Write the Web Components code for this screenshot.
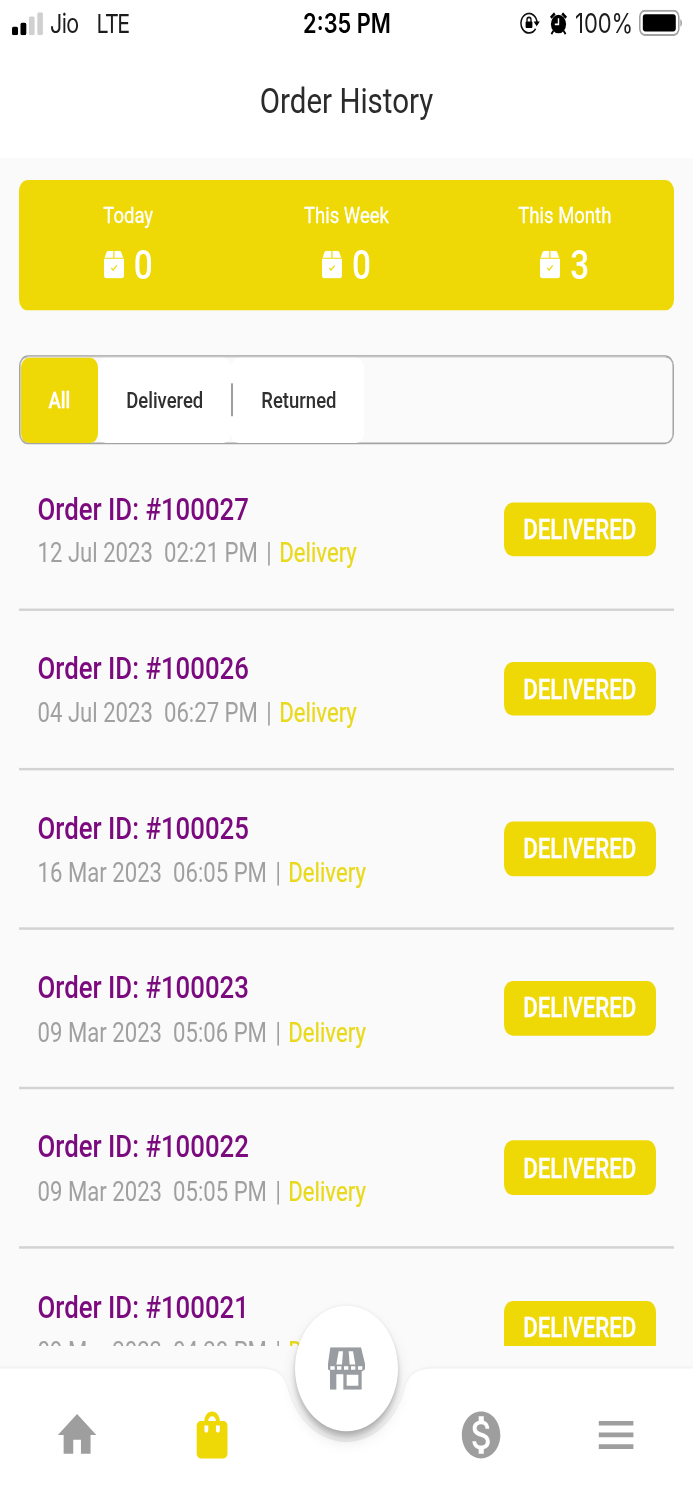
<!DOCTYPE html>
<html lang="en">
<head>
    <meta charset="utf-8">
    <title>Order History</title>
    <style>
        body {
            margin: 0;
            height: 1500px;
            overflow: hidden;
            background: #fff;
            font-family: Roboto, "Liberation Sans", sans-serif;
        }
    </style>
</head>
<body>
    <order-app>
        <status-bar carrier="Jio" network="LTE" time="2:35 PM" battery="100%"></status-bar>
        <page-title>Order History</page-title>
        <order-summary>
            <summary-item label="Today">0</summary-item>
            <summary-item label="This Week">0</summary-item>
            <summary-item label="This Month">3</summary-item>
        </order-summary>
        <filter-tabs>
            <filter-tab active>All</filter-tab>
            <filter-tab>Delivered</filter-tab>
            <filter-tab divided>Returned</filter-tab>
        </filter-tabs>
        <order-list></order-list>
        <bottom-nav slot="nav"></bottom-nav>
    </order-app>

    <script>
        class OrderApp extends HTMLElement {
            constructor() {
                super();
                this.attachShadow({ mode: "open" }).innerHTML = `
                <style>
                    :host {
                        --primary: #eed906;
                        --grey: #9e9e9e;
                        --accent: #7b0a7e;
                        display: flex;
                        flex-direction: column;
                        width: 693px;
                        height: 1232.6px;
                        overflow: hidden;
                        background: #fafafa;
                        transform: scaleY(1.217);
                        transform-origin: 0 0;
                    }
                    main {
                        display: flex;
                        flex-direction: column;
                        height: 1106.6px;
                        overflow: hidden;
                    }
                    footer {
                        flex: none;
                        margin-top: 18px;
                    }
                </style>
                <main><slot></slot></main>
                <footer><slot name="nav"></slot></footer>`;
            }
        }

        class StatusBar extends HTMLElement {
            connectedCallback() {
                this.attachShadow({ mode: "open" }).innerHTML = `
                <style>
                    :host {
                        flex: none;
                        display: grid;
                        grid-template-columns: 1fr auto 1fr;
                        align-items: center;
                        box-sizing: border-box;
                        height: 37px;
                        padding: 1px 11px 0 12px;
                        background: #fff;
                        color: #1c1c1c;
                        font-family: Inter, Roboto, sans-serif;
                        font-size: 21.5px;
                        line-height: 26px;
                    }
                    div {
                        display: flex;
                        align-items: center;
                    }
                    .right {
                        justify-content: flex-end;
                    }
                    .time {
                        font-weight: 600;
                        font-size: 21.8px;
                        color: #000;
                    }
                    .carrier {
                        margin: 0 18px 0 7px;
                    }
                    .carrier, .network {
                        letter-spacing: -0.6px;
                    }
                    .network {
                        letter-spacing: -1.6px;
                    }
                    .battery {
                        margin: 0 6px 0 8px;
                        font-size: 22px;
                        letter-spacing: -0.1px;
                    }
                    .alarm {
                        margin-left: 10px;
                    }
                    svg {
                        display: block;
                        flex: none;
                    }
                </style>
                <div>
                    <svg width="31" height="19" viewBox="0 0 31 19">
                        <rect x="0" y="12" width="6" height="7" rx="1.5"/>
                        <rect x="8.5" y="8.7" width="5.8" height="10.3" rx="1.5"/>
                        <rect x="17" y="3.5" width="5.6" height="15.5" rx="1.5" fill="#d0d0d0"/>
                        <rect x="25.3" y="0" width="5.6" height="19" rx="1.5" fill="#d0d0d0"/>
                    </svg>
                    <span class="carrier">${this.getAttribute("carrier")}</span>
                    <span class="network">${this.getAttribute("network")}</span>
                </div>
                <span class="time">${this.getAttribute("time")}</span>
                <div class="right">
                    <svg width="20" height="18" viewBox="0 0 20 18">
                        <path d="M15.6 13.6A8 8 0 1 1 17 9" fill="none" stroke="#111" stroke-width="1.5"/>
                        <path d="M13.6 7.6h6.2l-3.1 4z"/>
                        <rect x="5.6" y="7.6" width="6.8" height="5.4" rx=".8"/>
                        <path d="M7 8V6.3a2 2 0 0 1 4 0V8" fill="none" stroke="#111" stroke-width="1.4"/>
                    </svg>
                    <svg class="alarm" width="17" height="19" viewBox="0 0 17 19">
                        <circle cx="8.5" cy="9.8" r="7.6"/>
                        <path d="M.8 4.6 4.8 1M16.2 4.6 12.2 1" stroke="#000" stroke-width="2.4"/>
                        <path d="M3.4 15.4 1.4 18M13.6 15.4l2 2.6" stroke="#000" stroke-width="1.8"/>
                        <path d="M8.5 5v5H4.8" fill="none" stroke="#fff" stroke-width="1.4"/>
                    </svg>
                    <span class="battery">${this.getAttribute("battery")}</span>
                    <svg width="43" height="22" viewBox="0 0 43 22">
                        <rect x=".8" y=".9" width="39" height="19.8" rx="5" fill="#fff" stroke="#a2a2a2" stroke-width="1.6"/>
                        <rect x="3.8" y="3.8" width="33" height="14" rx="2.6"/>
                        <path d="M41.4 7.6c2 1 2 5.4 0 6.4z" fill="#999"/>
                    </svg>
                </div>`;
            }
        }

        class PageTitle extends HTMLElement {
            constructor() {
                super();
                this.attachShadow({ mode: "open" }).innerHTML = `
                <style>
                    :host {
                        flex: none;
                        display: flex;
                        align-items: center;
                        justify-content: center;
                        box-sizing: border-box;
                        height: 92.5px;
                        background: #fff;
                        color: #2b2b2b;
                        font-size: 29.5px;
                    }
                </style>
                <slot></slot>`;
            }
        }

        class OrderSummary extends HTMLElement {
            constructor() {
                super();
                this.attachShadow({ mode: "open" }).innerHTML = `
                <style>
                    :host {
                        flex: none;
                        display: grid;
                        grid-template-columns: repeat(3, 1fr);
                        box-sizing: border-box;
                        height: 107px;
                        margin: 18.6px 19px 0;
                        padding-top: 18px;
                        border-radius: 9px;
                        background: var(--primary);
                        color: #fff;
                    }
                </style>
                <slot></slot>`;
            }
        }

        class SummaryItem extends HTMLElement {
            connectedCallback() {
                this.attachShadow({ mode: "open" }).innerHTML = `
                <style>
                    :host {
                        display: flex;
                        flex-direction: column;
                        align-items: center;
                        gap: 10px;
                    }
                    .label {
                        font-size: 18.5px;
                        line-height: 22px;
                        -webkit-text-stroke: 0.25px;
                    }
                    .value {
                        display: flex;
                        align-items: center;
                        gap: 10px;
                        font-size: 33.3px;
                        line-height: 39px;
                        font-weight: 500;
                    }
                </style>
                <span class="label">${this.getAttribute("label")}</span>
                <div class="value">
                    <svg width="20" height="23" viewBox="0 0 20 23" fill="#fff">
                        <path d="M4.4 0h4.9v5.8H.6L2.4 1.4Q3 0 4.4 0zM10.5 0h4.9q1.4 0 2 1.4l1.8 4.4h-8.7z"/>
                        <path d="M0 6.7h20v13.9q0 2-2 2H2q-2 0-2-2z"/>
                        <path d="m7.2 14.2 1.9 1.7 3.6-3.7" fill="none" stroke="#eed906" stroke-width="1.1"/>
                    </svg>
                    <slot></slot>
                </div>`;
            }
        }

        class FilterTabs extends HTMLElement {
            constructor() {
                super();
                this.attachShadow({ mode: "open" }).innerHTML = `
                <style>
                    :host {
                        flex: none;
                        display: flex;
                        box-sizing: border-box;
                        height: 73px;
                        margin: 37.4px 19px 0.6px;
                        border: 1px solid #a3a3a3;
                        border-radius: 9px;
                        box-shadow: inset 0 0 0 .5px #a3a3a3;
                    }
                </style>
                <slot></slot>`;
            }
        }

        class FilterTab extends HTMLElement {
            constructor() {
                super();
                this.attachShadow({ mode: "open" }).innerHTML = `
                <style>
                    :host {
                        display: flex;
                        align-items: center;
                        margin: 0.5px 0;
                        border-radius: 8px;
                        background: #fff;
                        color: #303030;
                        font-size: 18.5px;
                        font-weight: 500;
                    }
                    :host([active]) {
                        margin-left: 0.5px;
                        background: var(--primary);
                        color: #fff;
                        -webkit-text-stroke: 0.3px;
                    }
                    :host([divided])::before {
                        content: "";
                        width: 2px;
                        height: 27px;
                        background: var(--grey);
                    }
                    span {
                        padding: 0 28px;
                    }
                </style>
                <span><slot></slot></span>`;
            }
        }

        class OrderItem extends HTMLElement {
            set order(order) {
                this._order = order;
                this.render();
            }

            render() {
                const root = this.shadowRoot || this.attachShadow({ mode: "open" });
                root.innerHTML = `
                <style>
                    :host {
                        flex: none;
                        display: flex;
                        align-items: center;
                        justify-content: space-between;
                        box-sizing: border-box;
                        height: 131.18px;
                        padding: 0 18.5px;
                        border-bottom: 2px solid #d3d3d3;
                    }
                    .id {
                        color: var(--accent);
                        font-size: 25.8px;
                        line-height: 30px;
                        font-weight: 500;
                    }
                    .meta {
                        margin-top: 8.6px;
                        color: #a0a0a0;
                        font-size: 22.15px;
                        line-height: 26px;
                        white-space: pre;
                    }
                    .sep {
                        padding: 0 2px 0 3px;
                    }
                    .type {
                        color: #e9d91c;
                        -webkit-text-stroke: 0.2px;
                    }
                    .badge {
                        display: flex;
                        align-items: center;
                        justify-content: center;
                        width: 151.5px;
                        height: 44.6px;
                        border-radius: 9px;
                        background: var(--primary);
                        color: #fff;
                        font-size: 22.2px;
                        font-weight: 500;
                        -webkit-text-stroke: 0.3px;
                    }
                </style>
                <div>
                    <div class="id">Order ID: #${this._order.id}</div>
                    <div class="meta">${this._order.date}  ${this._order.time} <span class="sep">|</span> <span class="type">Delivery</span></div>
                </div>
                <div class="badge">DELIVERED</div>`;
            }
        }

        class OrderList extends HTMLElement {
            connectedCallback() {
                this.attachShadow({ mode: "open" }).innerHTML = `
                <style>
                    :host {
                        flex: none;
                        display: flex;
                        flex-direction: column;
                        margin: 4.3px 19px 0;
                    }
                </style>`;
                this.orders.forEach(order => {
                    const item = document.createElement("order-item");
                    item.order = order;
                    this.shadowRoot.appendChild(item);
                });
            }

            get orders() {
                return [
                    { id: 100027, date: "12 Jul 2023", time: "02:21 PM" },
                    { id: 100026, date: "04 Jul 2023", time: "06:27 PM" },
                    { id: 100025, date: "16 Mar 2023", time: "06:05 PM" },
                    { id: 100023, date: "09 Mar 2023", time: "05:06 PM" },
                    { id: 100022, date: "09 Mar 2023", time: "05:05 PM" },
                    { id: 100021, date: "09 Mar 2023", time: "04:28 PM" }
                ];
            }
        }

        class BottomNav extends HTMLElement {
            constructor() {
                super();
                this.attachShadow({ mode: "open" }).innerHTML = `
                <style>
                    :host {
                        position: relative;
                        display: block;
                        height: 108.5px;
                    }
                    .bar {
                        position: absolute;
                        top: 0;
                        left: 0;
                        overflow: visible;
                        filter: drop-shadow(0 -1px 1px rgba(0, 0, 0, .05));
                    }
                    /* floating action button sitting in the notch */
                    .fab {
                        position: absolute;
                        top: -51.5px;
                        left: 294.5px;
                        display: flex;
                        align-items: center;
                        justify-content: center;
                        width: 103.5px;
                        height: 103.5px;
                        border-radius: 50%;
                        background: #fff;
                        box-shadow: 0 6px 6px -1px rgba(0, 0, 0, .22), 0 8px 14px rgba(0, 0, 0, .1), 0 0 3px rgba(0, 0, 0, .08);
                    }
                    .items {
                        position: relative;
                        display: grid;
                        grid-template-columns: repeat(5, 1fr);
                        justify-items: center;
                        padding: 32px 9.5px 0;
                        fill: var(--grey);
                    }
                    .items svg {
                        width: 46.2px;
                        height: 46.2px;
                    }
                    .items .active {
                        fill: var(--primary);
                    }
                </style>
                <svg class="bar" width="693" height="109" viewBox="0 0 693 109">
                    <path d="M0 .5H258C276 .5 284 5 288 18A61 61 0 0 0 404.5 18C408.5 5 417 .5 435 .5H693V109H0z" fill="#fff"/>
                </svg>
                <div class="fab">
                    <svg width="37" height="35" viewBox="0 0 111 128" preserveAspectRatio="none">
                        <path d="M7 0H99L111 50V66L103 72H8L0 66V50z" fill="#999ca1"/>
                        <path d="M32 12H45L42 52H25zM62 12H75L82 52H65z" fill="#fff"/>
                        <path d="M7 57h13v11H7zM27 57h13v11H27zM48 57h13v11H48zM69 57h13v11H69zM90 57h13v11H90z" fill="#fff"/>
                        <path d="M6 71H101V128H46V81H25V128H6zM56 83V116H91V83z" fill="#999ca1" fill-rule="evenodd"/>
                    </svg>
                </div>
                <div class="items">
                    <svg viewBox="0 0 24 24"><path d="M10 20v-6h4v6h5v-8h3L12 3 2 12h3v8z"/></svg>
                    <svg class="active" viewBox="0 0 24 24"><path d="M18 6h-2c0-2.21-1.79-4-4-4S8 3.79 8 6H6c-1.1 0-2 .9-2 2v12c0 1.1.9 2 2 2h12c1.1 0 2-.9 2-2V8c0-1.1-.9-2-2-2zm-8 4c0 .55-.45 1-1 1s-1-.45-1-1V8h2v2zm2-6c1.1 0 2 .9 2 2h-4c0-1.1.9-2 2-2zm4 6c0 .55-.45 1-1 1s-1-.45-1-1V8h2v2z"/></svg>
                    <span></span>
                    <svg viewBox="0 0 24 24"><path d="M12 2C6.48 2 2 6.48 2 12s4.48 10 10 10 10-4.48 10-10S17.52 2 12 2zm1.41 16.09V20h-2.67v-1.93c-1.71-.36-3.16-1.46-3.27-3.4h1.96c.1 1.05.82 1.87 2.65 1.87 1.96 0 2.4-.98 2.4-1.59 0-.83-.44-1.61-2.67-2.14-2.48-.6-4.18-1.62-4.18-3.67 0-1.72 1.39-2.84 3.11-3.21V4h2.67v1.95c1.86.45 2.79 1.86 2.85 3.39H14.3c-.05-1.11-.64-1.87-2.22-1.87-1.5 0-2.4.68-2.4 1.64 0 .84.65 1.39 2.67 1.91s4.18 1.39 4.18 3.91c-.01 1.83-1.38 2.83-3.12 3.16z"/></svg>
                    <svg viewBox="0 0 24 24"><path d="M3 18h18v-2H3v2zm0-5h18v-2H3v2zm0-7v2h18V6H3z"/></svg>
                </div>`;
            }
        }

        customElements.define("order-app", OrderApp);
        customElements.define("status-bar", StatusBar);
        customElements.define("page-title", PageTitle);
        customElements.define("order-summary", OrderSummary);
        customElements.define("summary-item", SummaryItem);
        customElements.define("filter-tabs", FilterTabs);
        customElements.define("filter-tab", FilterTab);
        customElements.define("order-item", OrderItem);
        customElements.define("order-list", OrderList);
        customElements.define("bottom-nav", BottomNav);
    </script>
</body>
</html>
